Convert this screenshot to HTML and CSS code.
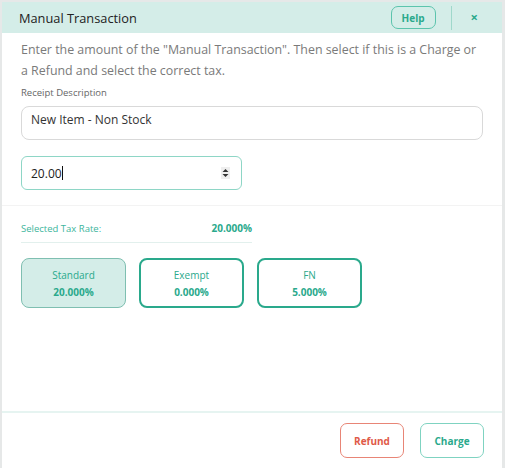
FILE: index.html
```html
<!DOCTYPE html>
<html>
<head>
<meta charset="utf-8">
<link rel="stylesheet" href="styles.css">
</head>
<body>
<div class="modal">
  <div class="header">
    <div class="title">Manual Transaction</div>
    <button class="help">Help</button>
    <div class="divider"></div>
    <div class="close">×</div>
  </div>
  <div class="content">
    <p class="intro">Enter the amount of the "Manual Transaction". Then select if this is a Charge or a Refund and select the correct tax.</p>
    <div class="label">Receipt Description</div>
    <div class="textarea">New Item - Non Stock</div>
    <div class="number">
      <span class="val">20.00</span><span class="caret"></span>
      <span class="spin"><svg width="7" height="10" viewBox="0 0 7 10"><path d="M0.5 4 L3.5 1 L6.5 4 Z M0.5 6 L3.5 9 L6.5 6 Z" fill="#333"/></svg></span>
    </div>
  </div>
  <div class="sep"></div>
  <div class="tax">
    <div class="rate-row">
      <span class="rate-label">Selected Tax Rate:</span>
      <span class="rate-value">20.000%</span>
    </div>
    <div class="cards">
      <div class="card selected"><div class="cname">Standard</div><div class="cval">20.000%</div></div>
      <div class="card"><div class="cname">Exempt</div><div class="cval">0.000%</div></div>
      <div class="card"><div class="cname">FN</div><div class="cval">5.000%</div></div>
    </div>
  </div>
  <div class="footer">
    <button class="btn refund">Refund</button>
    <button class="btn charge">Charge</button>
  </div>
</div>
</body>
</html>
```
FILE: styles.css
```css
html, body {
  margin: 0;
  padding: 0;
}
body {
  background: #e6e8e8;
  font-family: "Open Sans", "Liberation Sans", sans-serif;
  height: 468px;
  overflow: hidden;
}
.modal {
  margin: 2px 3px 0 2px;
  background: #fff;
  height: 466px;
  display: flex;
  flex-direction: column;
}
.header {
  height: 31px;
  flex: none;
  background: #d4ede8;
  display: flex;
  align-items: center;
  padding: 0 24px 0 17px;
}
.title {
  flex: 1;
  font-size: 12.8px;
  color: #222;
}
.help {
  width: 45px;
  height: 23px;
  border: 1px solid #5cc4ad;
  border-radius: 7px;
  background: transparent;
  color: #2aa98c;
  font-family: inherit;
  font-weight: 700;
  font-size: 10px;
  padding: 0;
}
.divider {
  width: 1px;
  height: 24px;
  background: #9fd8cb;
  margin-left: 15px;
}
.close {
  margin-left: 19px;
  color: #2aa98c;
  font-weight: 700;
  font-size: 13px;
  line-height: 1;
}
.content {
  padding: 6px 19px 0 19px;
}
.intro {
  margin: 0;
  font-size: 12.4px;
  line-height: 21px;
  color: #7a7a7a;
}
.label {
  margin-top: 5px;
  font-size: 9.5px;
  line-height: 13px;
  color: #666;
}
.textarea {
  margin-top: 7px;
  height: 34px;
  border: 1px solid #d9d9d9;
  border-radius: 8px;
  padding: 4px 9px;
  box-sizing: border-box;
  font-size: 12px;
  color: #333;
}
.number {
  margin-top: 16px;
  width: 221px;
  height: 34px;
  border: 1px solid #8ed6c6;
  border-radius: 6px;
  box-sizing: border-box;
  display: flex;
  align-items: center;
  padding: 0 9px;
  font-size: 12px;
  color: #222;
}
.caret {
  width: 1px;
  height: 14px;
  background: #111;
}
.spin {
  margin-left: auto;
  width: 9px;
  height: 12px;
  background: #eee;
  display: flex;
  align-items: center;
  justify-content: center;
  margin-right: 2px;
}
.sep {
  margin-top: 15px;
  height: 1px;
  flex: none;
  background: #f3f3f3;
}
.tax {
  padding: 0 19px;
}
.rate-row {
  margin-top: 15px;
  width: 231px;
  height: 14px;
  display: flex;
  justify-content: space-between;
  align-items: center;
  padding-bottom: 7px;
  border-bottom: 1px solid #e2f0ed;
}
.rate-label {
  font-size: 9.5px;
  color: #3db59c;
}
.rate-value {
  font-size: 10px;
  font-weight: 700;
  color: #2aa98c;
}
.cards {
  margin-top: 15px;
  display: flex;
  gap: 13px;
}
.card {
  width: 105px;
  height: 50px;
  box-sizing: border-box;
  border: 2px solid #2aa98c;
  border-radius: 8px;
  display: flex;
  flex-direction: column;
  align-items: center;
  justify-content: center;
  gap: 3px;
  color: #2aa98c;
}
.card.selected {
  background: #d4ede8;
  border: 1px solid #7fbfb1;
}
.cname {
  font-size: 10px;
}
.cval {
  font-size: 10px;
  font-weight: 700;
}
.footer {
  margin-top: auto;
  height: 57px;
  box-sizing: border-box;
  flex: none;
  border-top: 2px solid #e6f4f1;
  display: flex;
  justify-content: flex-end;
  align-items: flex-start;
  padding: 10px 18px 0 0;
  gap: 16px;
}
.btn {
  width: 64px;
  height: 35px;
  border-radius: 7px;
  background: #fff;
  font-family: inherit;
  font-weight: 700;
  font-size: 10px;
  padding: 0;
}
.refund {
  border: 1px solid #e88576;
  color: #e05a48;
}
.charge {
  border: 1px solid #7fd3c1;
  color: #2aa98c;
}
```
